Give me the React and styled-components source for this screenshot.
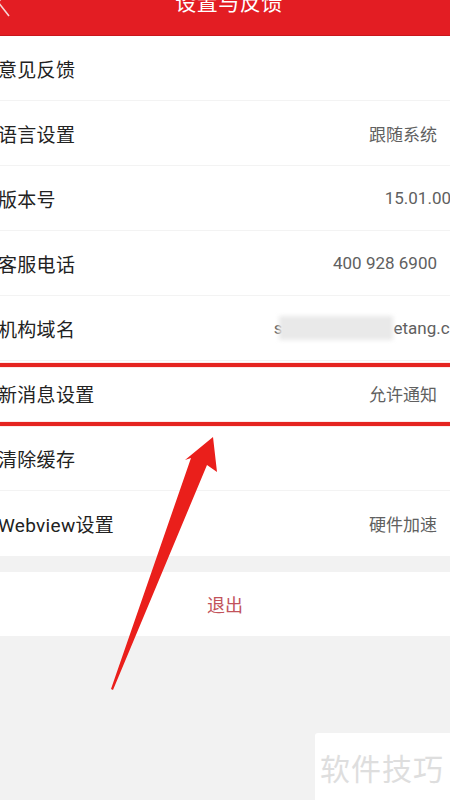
import styled, { createGlobalStyle } from "styled-components";

const GlobalStyle = createGlobalStyle`
  html, body {
    margin: 0;
    padding: 0;
    background: #f2f2f2;
  }
  body {
    font-family: "Roboto", "Noto Sans CJK SC", sans-serif;
  }
`;

const Screen = styled.div`
  position: relative;
  width: 450px;
  height: 800px;
  overflow: hidden;
  background: #f2f2f2;
`;

const Header = styled.div`
  height: 36px;
  background: #e31d23;
  border-bottom: 1px solid #c8161c;
  box-sizing: border-box;
  display: flex;
  align-items: flex-start;
  justify-content: center;
  position: relative;
  overflow: hidden;
`;

const BackIcon = styled.svg`
  position: absolute;
  left: -6px;
  top: -10px;
  width: 20px;
  height: 28px;
`;

const Title = styled.h1`
  margin: -8px 0 0 8px;
  font-size: 21px;
  line-height: 22px;
  font-weight: 400;
  color: #fff;
  letter-spacing: 0.5px;
`;

const List = styled.div`
  background: #fff;
`;

const Row = styled.div`
  height: 65px;
  display: flex;
  align-items: center;
  justify-content: space-between;
  border-bottom: 1px solid ${(p) => (p.last ? "transparent" : "#f3f3f3")};
  box-sizing: border-box;
  padding-right: 13px;
  overflow: hidden;
  white-space: nowrap;
`;

const Label = styled.span`
  margin-left: -2px;
  font-size: 19px;
  color: #222;
  letter-spacing: 0.3px;
`;

const Value = styled.span`
  flex-shrink: 0;
  font-size: 17px;
  color: #606060;
  margin-right: ${(p) => p.offset || 0}px;
  display: flex;
  align-items: center;
`;

const Blurred = styled.span`
  display: inline-block;
  width: 114px;
  height: 24px;
  background: #e9e9e9;
  filter: blur(2px);
  margin: 0 0 0 -3px;
`;

const Gap = styled.div`
  height: 16px;
`;

const Logout = styled.div`
  height: 64px;
  background: #fff;
  display: flex;
  align-items: center;
  justify-content: center;
  font-size: 18px;
  color: #c2535b;
`;

const Mark = styled.div`
  position: absolute;
  height: 4px;
  left: 0;
  right: 0;
  top: ${(p) => p.top}px;
  background: #e52420;
  box-shadow: 0 0 1px #e52420;
`;

const Arrow = styled.svg`
  position: absolute;
  left: 0;
  top: 0;
  width: 450px;
  height: 800px;
  pointer-events: none;
`;

const Watermark = styled.div`
  position: absolute;
  left: 315px;
  top: 733px;
  right: 0;
  bottom: 0;
  background: #fff;
  border-top-left-radius: 3px;
  display: flex;
  align-items: center;
  padding-left: 5px;
  font-size: 30px;
  color: #dedede;
  letter-spacing: 1px;
  font-family: "Noto Sans CJK SC", sans-serif;
`;

const rows = [
  { label: "意见反馈" },
  { label: "语言设置", value: "跟随系统" },
  { label: "版本号", value: "15.01.00", offset: -14 },
  { label: "客服电话", value: "400 928 6900" },
  { label: "机构域名", domain: true },
  { label: "新消息设置", value: "允许通知" },
  { label: "清除缓存" },
  { label: "Webview设置", value: "硬件加速" },
];

const App = () => {
  return (
    <Screen>
      <GlobalStyle />
      <Header>
        <BackIcon viewBox="0 0 20 28">
          <polyline
            points="14,2 4,12 15,26"
            fill="none"
            stroke="#f6d6d6"
            strokeWidth="1.6"
          />
        </BackIcon>
        <Title>设置与反馈</Title>
      </Header>
      <List>
        {rows.map((r, i) => (
          <Row key={r.label} last={i === rows.length - 1}>
            <Label>{r.label}</Label>
            {r.domain ? (
              <Value offset={-22}>
                s<Blurred />etang.cn
              </Value>
            ) : (
              r.value && <Value offset={r.offset}>{r.value}</Value>
            )}
          </Row>
        ))}
      </List>
      <Gap />
      <Logout>退出</Logout>

      {/* highlight around the notification row */}
      <Mark top={363} />
      <Mark top={422} />
      <Arrow viewBox="0 0 450 800">
        <path
          d="M213 437 L217 472 L207 465 L113 690 L111 689 L191 458 L185 460 Z"
          fill="#ea1f1b"
        />
      </Arrow>

      <Watermark>软件技巧</Watermark>
    </Screen>
  );
};

export default App;
